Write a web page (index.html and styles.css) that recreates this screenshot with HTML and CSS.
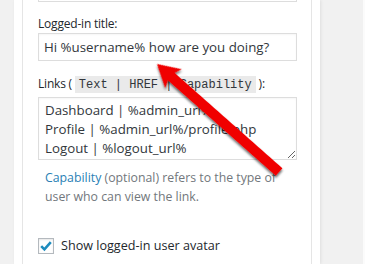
FILE: index.html
```html
<!DOCTYPE html>
<html lang="en">
  <head>
    <meta charset="UTF-8" />
    <title>Login widget settings</title>
    <link rel="stylesheet" href="styles.css">
  </head>
  <body>
    <div class="page">
      <div class="widget">
        <div class="widget-inside">
          <div class="prev-field"></div>

          <p class="field-label">Logged-in title:</p>
          <input class="text-field" type="text" value="Hi %username% how are you doing?" />

          <p class="field-label links-label">
            Links ( <code>Text | HREF | Capability</code> ):
          </p>
          <textarea class="links-field" rows="3">Dashboard | %admin_url%
Profile | %admin_url%/profile.php
Logout | %logout_url%</textarea>

          <p class="description">
            <span class="hl">Capability</span> (optional) refers to the type of<br />
            user who can view the link.
          </p>

          <label class="check-row">
            <span class="checkbox">
              <svg width="14" height="14" viewBox="0 0 14 14">
                <path d="M2.2 7.2 L5.4 10.4 L11.8 3.2" fill="none" stroke="#1e8cbe" stroke-width="2.6" />
              </svg>
            </span>
            Show logged-in user avatar
          </label>
        </div>
      </div>
      <div class="gutter"></div>
      <div class="edge"></div>
    </div>

    <svg class="arrow" width="365" height="264" viewBox="0 0 365 264">
      <defs>
        <filter id="shadow" x="-20%" y="-20%" width="140%" height="140%">
          <feDropShadow dx="1.5" dy="1.5" stdDeviation="1.2" flood-color="#000" flood-opacity="0.6" />
        </filter>
      </defs>
      <g transform="translate(157 64) rotate(41.5)" filter="url(#shadow)">
        <polygon points="0,0 22,-12.5 19,-5 163,-5 163,5 19,5 22,12.5" fill="#f00000" />
      </g>
    </svg>
  </body>
</html>
```

FILE: styles.css
```css
* {
  margin: 0;
  padding: 0;
  box-sizing: border-box;
}

body {
  background-color: #f1f1f1;
  font-family: "Open Sans", "Noto Sans", sans-serif;
  font-size: 12px;
  color: #23282d;
  overflow: hidden;
}

.page {
  display: flex;
  flex-direction: row;
  height: 264px;
}

.widget {
  margin-left: 14px;
  width: 306px;
  background-color: #fff;
  padding: 0 8px;
  box-shadow: 1px 0 3px rgba(0, 0, 0, 0.08);
}

.widget-inside {
  height: 100%;
  border-left: 1px solid #e5e5e5;
  border-right: 1px solid #e5e5e5;
  padding: 0 14px 0 15px;
}

.gutter {
  flex: 1;
}

.edge {
  width: 2px;
  background-color: #fbfbfb;
}

.prev-field {
  height: 2px;
  border: 1px solid #ddd;
  border-top: none;
}

.field-label {
  line-height: 18px;
  margin-top: 13px;
  letter-spacing: -0.2px;
}

.text-field {
  display: block;
  width: 100%;
  height: 28px;
  border: 1px solid #ddd;
  padding: 3px 5px;
  font-family: inherit;
  font-size: 13.3px;
  color: #32373c;
  box-shadow: inset 0 1px 2px rgba(0, 0, 0, 0.04);
}

.links-label {
  margin-top: 14px;
}

code {
  font-family: "Liberation Mono", monospace;
  font-size: 12px;
  letter-spacing: 0;
  background-color: #eaeaea;
  padding: 2px 4px 1px;
  color: #32373c;
}

.links-field {
  display: block;
  width: 100%;
  height: 63px;
  margin-top: 3px;
  border: 1px solid #ddd;
  padding: 3px 6px;
  font-family: inherit;
  font-size: 13.3px;
  line-height: 19px;
  color: #32373c;
  resize: vertical;
  overflow: hidden;
  box-shadow: inset 0 1px 2px rgba(0, 0, 0, 0.04);
}

.description {
  margin-top: 8px;
  padding-left: 7px;
  font-size: 12.3px;
  line-height: 19px;
  color: #72777c;
}

.hl {
  color: #2a7fb5;
}

.check-row {
  display: flex;
  align-items: center;
  gap: 7px;
  margin-top: 31px;
  font-size: 12.6px;
  line-height: 18px;
}

.checkbox {
  display: flex;
  align-items: center;
  justify-content: center;
  width: 16px;
  height: 16px;
  border: 1px solid #b4b9be;
  background-color: #fff;
  box-shadow: inset 0 1px 2px rgba(0, 0, 0, 0.1);
}

.arrow {
  position: absolute;
  left: 0;
  top: 0;
  pointer-events: none;
}
```
